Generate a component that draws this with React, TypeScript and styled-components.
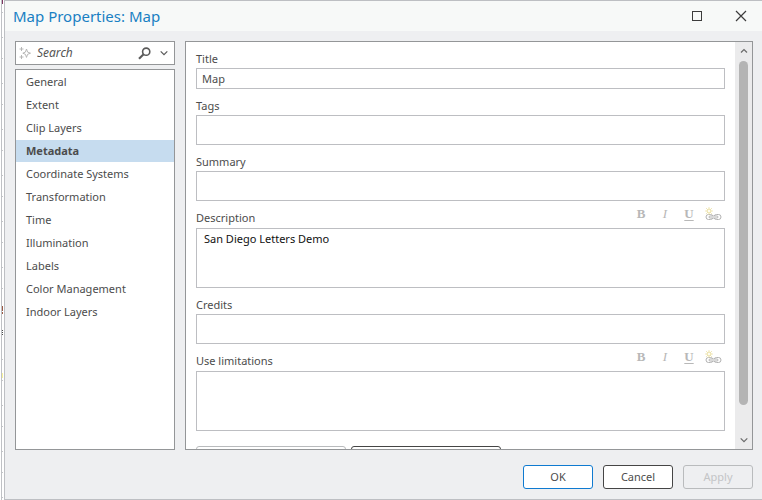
import React, { useState } from "react";
import styled, { createGlobalStyle, css } from "styled-components";

const GlobalStyle = createGlobalStyle`
  *, *::before, *::after { box-sizing: border-box; }
  body { margin: 0; background: #ffffff; }
  button, input, textarea { font: inherit; color: inherit; }
`;

const Page = styled.div`
  display: flex;
  height: 100vh;
  overflow: hidden;
  font-family: "Noto Sans", "Open Sans", sans-serif;
  font-size: 11px;
  line-height: 18px;
  color: #4c4c4c;
`;

const Backdrop = styled.div`
  flex: 0 0 4px;
  background:
    linear-gradient(#7d3561, #7d3561) 2px 0 / 1px 4px no-repeat,
    linear-gradient(#9c5a45, #9c5a45) 2px 306px / 1px 5px no-repeat,
    linear-gradient(#9c5a45, #9c5a45) 2px 312px / 1px 2px no-repeat,
    repeating-linear-gradient(#4c4c4c 0 1px, #ffffff 1px 2px) 2px 330px / 1px 6px no-repeat,
    linear-gradient(#f7f29a, #f7f29a) 2px 373px / 1px 5px no-repeat,
    linear-gradient(#bfc1c5, #bfc1c5) 1px 0 / 1px 100% no-repeat,
    linear-gradient(#c4c5c8 1px, transparent 1px) 2px 37px / 1px 46px repeat-y,
    linear-gradient(#c4c5c8 1px, transparent 1px) 2px 12px / 1px 46px repeat-y,
    #ffffff;
`;

const Dialog = styled.div`
  flex: 1;
  min-width: 0;
  display: flex;
  flex-direction: column;
  background: #eeeff1;
  border: 1px solid #bdbfc3;
  border-right: 0;
`;

const TitleBar = styled.header`
  flex: none;
  display: flex;
  align-items: center;
  height: 30px;
  padding: 0 9px 0 8px;
  background: #f7f9f8;
`;

const DialogTitle = styled.h1`
  flex: 1;
  margin: 0;
  font-size: 15px;
  font-weight: 400;
  line-height: 24px;
  color: #1980c3;
`;

const WindowButton = styled.button`
  display: grid;
  place-items: center;
  width: 24px;
  height: 24px;
  margin-left: 20px;
  padding: 0;
  border: 0;
  background: none;
  color: #3c3c3c;
`;

const Body = styled.div`
  flex: 1;
  min-height: 0;
  display: flex;
  gap: 10px;
  padding: 10px 9px 0 10px;
`;

const Sidebar = styled.aside`
  flex: 0 0 160px;
  min-width: 0;
  display: flex;
  flex-direction: column;
  gap: 4px;
`;

const SearchBox = styled.div`
  flex: none;
  display: flex;
  align-items: center;
  height: 24px;
  padding-left: 3px;
  background: #ffffff;
  border: 1px solid #949698;
`;

const SearchInput = styled.input`
  flex: 1;
  min-width: 0;
  padding: 0 0 0 5px;
  border: 0;
  outline: 0;
  background: none;
  font-size: 12px;
  font-style: italic;
  &::placeholder { color: #555555; opacity: 1; }
`;

const IconButton = styled.button`
  display: grid;
  place-items: center;
  width: 20px;
  height: 20px;
  padding: 0;
  border: 0;
  background: none;
  color: #5a5a5a;
`;

const PageList = styled.nav`
  flex: 1;
  min-height: 0;
  display: flex;
  flex-direction: column;
  gap: 1px;
  padding-top: 1px;
  background: #ffffff;
  border: 1px solid #949698;
`;

const PageItem = styled.button<{ $active: boolean }>`
  flex: none;
  height: 22px;
  padding: 0 10px;
  border: 0;
  text-align: left;
  line-height: 22px;
  background: none;
  ${(p) => p.$active && css`
    background: #c6dcef;
    font-weight: 700;
  `}
`;

const Panel = styled.main`
  flex: 1;
  min-width: 0;
  display: flex;
  background: #ffffff;
  border: 1px solid #949698;
`;

const Form = styled.form`
  flex: 1;
  min-width: 0;
  overflow: hidden;
  display: flex;
  flex-direction: column;
  padding: 0 10px;
`;

const FieldHead = styled.div<{ $tall?: boolean }>`
  flex: none;
  display: flex;
  justify-content: space-between;
  align-items: flex-end;
  height: ${(p) => (p.$tall ? 27 : 26)}px;
  padding-bottom: ${(p) => (p.$tall ? 1 : 0)}px;
`;

const Label = styled.label`
  line-height: 18px;
`;

const fieldStyle = css`
  flex: none;
  display: block;
  width: 100%;
  margin: 0;
  border: 1px solid #bdbec2;
  border-radius: 0;
  outline: 0;
  background: #ffffff;
`;

const TextField = styled.input<{ $short?: boolean }>`
  ${fieldStyle}
  height: ${(p) => (p.$short ? 21 : 30)}px;
  padding: 0 5px;
`;

const TextArea = styled.textarea`
  ${fieldStyle}
  height: 60px;
  padding: 2px 7px;
  resize: none;
  overflow: hidden;
  line-height: 16px;
  color: #111111;
`;

const FormatBar = styled.div`
  display: flex;
  align-items: center;
  gap: 4px;
  height: 26px;
  padding-right: 2px;
`;

const FormatButton = styled.button<{ $look?: "italic" | "underline" }>`
  display: grid;
  place-items: center;
  width: 20px;
  height: 20px;
  padding: 0;
  border: 0;
  background: none;
  font-family: "Liberation Serif", serif;
  font-size: 13px;
  line-height: 18px;
  color: #b8b8b8;
  font-weight: ${(p) => (p.$look === "italic" ? 400 : 700)};
  font-style: ${(p) => (p.$look === "italic" ? "italic" : "normal")};
  text-decoration: ${(p) => (p.$look === "underline" ? "underline" : "none")};
  text-underline-offset: 2px;
`;

const FormActions = styled.div`
  flex: none;
  display: flex;
  gap: 5px;
  padding-top: 15px;
`;

const Button = styled.button<{ $tone?: "primary" | "muted"; $wide?: boolean }>`
  width: ${(p) => (p.$wide ? 150 : 70)}px;
  height: 24px;
  padding: 0;
  border: 1px solid ${(p) => (p.$tone === "primary" ? "#0f7ad0" : p.$tone === "muted" ? "#b9bbbd" : "#454545")};
  border-radius: 3px;
  background: ${(p) => (p.$tone === "muted" ? "transparent" : "#ffffff")};
  color: ${(p) => (p.$tone === "muted" ? "#c3c4c6" : "#4c4c4c")};
  line-height: 20px;
`;

const ScrollBar = styled.div`
  flex: 0 0 17px;
  display: flex;
  flex-direction: column;
  background: #ebebec;
`;

const ScrollArrow = styled.button`
  flex: none;
  display: grid;
  place-items: center;
  height: 18px;
  padding: 0;
  border: 0;
  background: none;
  color: #6a6a6a;
`;

const Track = styled.div`
  flex: 1;
  padding: 1px 4px 0;
`;

const Thumb = styled.div`
  height: 93%;
  border-radius: 5px;
  background: #b4b4b4;
`;

const Footer = styled.footer`
  flex: none;
  display: flex;
  justify-content: flex-end;
  gap: 10px;
  padding: 15px 9px 10px;
`;

const Sparkle = () => (
  <svg width="13" height="14" viewBox="0 0 13 14" fill="none" stroke="#b0b0b0" strokeWidth="0.9">
    <path d="M7.5 3 8.6 6.1 11.5 7.2 8.6 8.3 7.5 11.4 6.4 8.3 3.8 7.2 6.4 6.1Z" />
    <path d="M2.5 1v4M.5 3h4M2.5 9v4M.5 11h4" />
  </svg>
);

const Magnifier = () => (
  <svg width="13" height="13" viewBox="0 0 13 13" fill="none" stroke="currentColor">
    <circle cx="8.2" cy="4.7" r="3.6" strokeWidth="1.6" />
    <path d="M5.6 7.3 1 11.7" strokeWidth="2.1" />
  </svg>
);

const Chevron = ({ up = false }: { up?: boolean }) => (
  <svg width="8" height="8" viewBox="0 0 8 8" fill="none" stroke="currentColor" strokeWidth="1.2">
    <path d={up ? "M1 5.5 4 2.5 7 5.5" : "M.7 2.3 4 5.6 7.3 2.3"} />
  </svg>
);

const AddLink = () => (
  <svg width="17" height="14" viewBox="0 0 17 14" fill="none">
    <g stroke="#b2b2b2">
      <rect x="1" y="7.5" width="7" height="5" rx="2.5" />
      <rect x="9" y="7.5" width="7" height="5" rx="2.5" />
      <rect x="4" y="9" width="9" height="2" rx="1" fill="#ffffff" />
    </g>
    <g stroke="#eadf9f">
      <circle cx="4" cy="4" r="2" fill="#fffdf0" />
      <path d="M4 .3v1.2M4 6.5v1.2M.3 4h1.2M6.5 4h1.2M1.3 1.3l1 1M5.7 5.7l1 1M6.7 1.3l-1 1M2.3 5.7l-1 1" />
    </g>
  </svg>
);

const pages = [
  "General",
  "Extent",
  "Clip Layers",
  "Metadata",
  "Coordinate Systems",
  "Transformation",
  "Time",
  "Illumination",
  "Labels",
  "Color Management",
  "Indoor Layers",
];

const RichField = ({ id, label, value = "" }: { id: string; label: string; value?: string }) => (
  <>
    <FieldHead $tall>
      <Label htmlFor={id}>{label}</Label>
      <FormatBar>
        <FormatButton type="button" aria-label="Bold">B</FormatButton>
        <FormatButton type="button" aria-label="Italic" $look="italic">I</FormatButton>
        <FormatButton type="button" aria-label="Underline" $look="underline">U</FormatButton>
        <FormatButton type="button" aria-label="Insert link"><AddLink /></FormatButton>
      </FormatBar>
    </FieldHead>
    <TextArea id={id} defaultValue={value} />
  </>
);

const LineField = ({ id, label, value = "", short }: { id: string; label: string; value?: string; short?: boolean }) => (
  <>
    <FieldHead>
      <Label htmlFor={id}>{label}</Label>
    </FieldHead>
    <TextField id={id} defaultValue={value} $short={short} />
  </>
);

export default function App() {
  const [active, setActive] = useState("Metadata");
  return (
    <Page>
      <GlobalStyle />
      <Backdrop />
      <Dialog role="dialog" aria-labelledby="dialog-title">
        <TitleBar>
          <DialogTitle id="dialog-title">Map Properties: Map</DialogTitle>
          <WindowButton aria-label="Maximize">
            <svg width="10" height="10" fill="none" stroke="currentColor">
              <rect x="0.5" y="0.5" width="9" height="9" />
            </svg>
          </WindowButton>
          <WindowButton aria-label="Close">
            <svg width="12" height="12" fill="none" stroke="currentColor" strokeWidth="1.2">
              <path d="M1 1l10 10M11 1 1 11" />
            </svg>
          </WindowButton>
        </TitleBar>
        <Body>
          <Sidebar>
            <SearchBox>
              <Sparkle />
              <SearchInput type="text" placeholder="Search" aria-label="Search" />
              <IconButton aria-label="Find"><Magnifier /></IconButton>
              <IconButton aria-label="Search options"><Chevron /></IconButton>
            </SearchBox>
            <PageList>
              {pages.map((name) => (
                <PageItem key={name} $active={name === active} onClick={() => setActive(name)}>
                  {name}
                </PageItem>
              ))}
            </PageList>
          </Sidebar>
          <Panel>
            <Form onSubmit={(e) => e.preventDefault()}>
              <LineField id="title" label="Title" value="Map" short />
              <LineField id="tags" label="Tags" />
              <LineField id="summary" label="Summary" />
              <RichField id="description" label="Description" value="San Diego Letters Demo" />
              <LineField id="credits" label="Credits" />
              <RichField id="limitations" label="Use limitations" />
              <FormActions>
                <Button type="button" $tone="muted" $wide />
                <Button type="button" $wide />
              </FormActions>
            </Form>
            <ScrollBar>
              <ScrollArrow aria-label="Scroll up"><Chevron up /></ScrollArrow>
              <Track><Thumb /></Track>
              <ScrollArrow aria-label="Scroll down"><Chevron /></ScrollArrow>
            </ScrollBar>
          </Panel>
        </Body>
        <Footer>
          <Button $tone="primary">OK</Button>
          <Button>Cancel</Button>
          <Button $tone="muted" disabled>Apply</Button>
        </Footer>
      </Dialog>
    </Page>
  );
}
